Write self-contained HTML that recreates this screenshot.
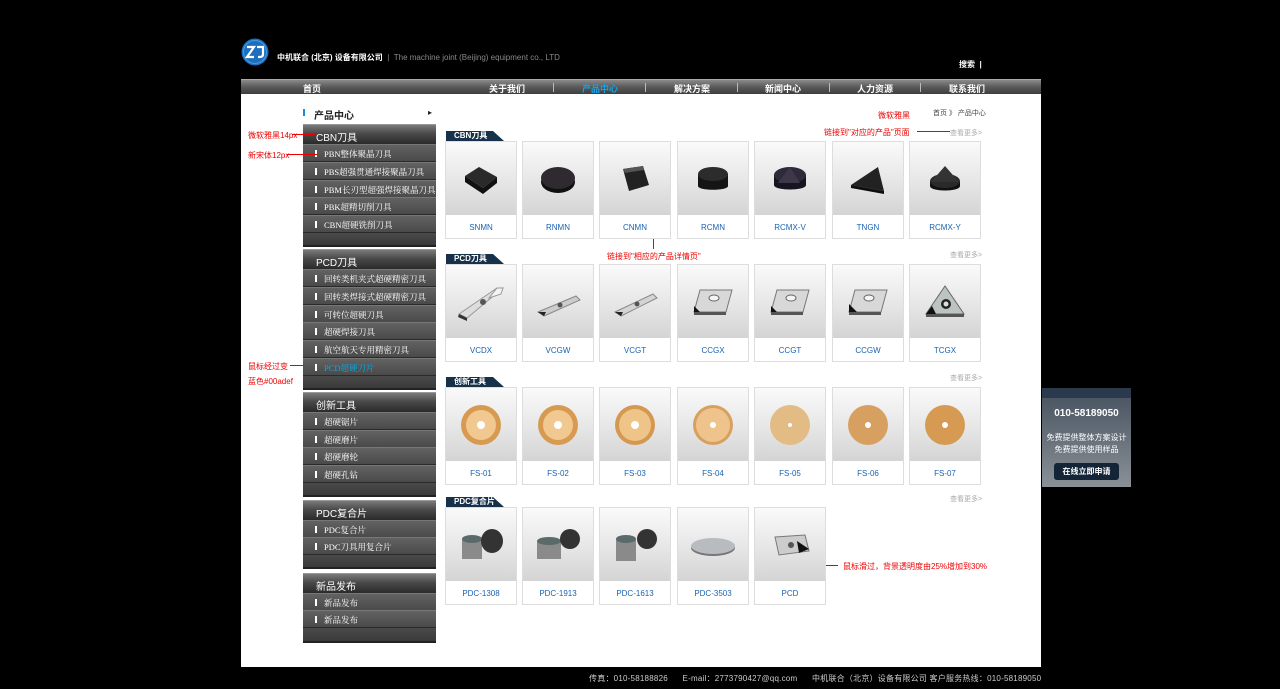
<!DOCTYPE html>
<html><head><meta charset="utf-8"><style>
*{margin:0;padding:0;box-sizing:border-box}
body{width:1280px;height:689px;background:#000;position:relative;overflow:hidden;font-family:"Liberation Sans","Noto Sans CJK SC",sans-serif;color:#fff}
.a{position:absolute}
.nav{left:241px;top:79px;width:800px;height:15px;background:linear-gradient(#8a8a8a,#5a5a5a 50%,#3e3e3e);border-top:1px solid #aaa}
.nav span{position:absolute;top:2px;font-size:9px;font-weight:bold;color:#fff}
.nav i{position:absolute;top:3px;width:1px;height:9px;background:#bbb}
.main{left:241px;top:94px;width:800px;height:573px;background:#fff}
.hd{left:303px;width:133px;height:20px;background:linear-gradient(#7a7a7a,#4a4a4a 45%,#2a2a2a);font-size:10px;padding:4px 0 0 13px;color:#fff;border-top:1px solid #999}
.it{left:303px;width:133px;height:18px;background:linear-gradient(#626262,#4a4a4a);border-bottom:1px solid #2a2a2a;border-top:1px solid #777;font-size:8.5px;padding:3px 0 0 21px;color:#fff;font-family:"Liberation Serif","Noto Serif CJK SC",serif;white-space:nowrap;overflow:hidden}
.it:before{content:"";position:absolute;left:12px;top:5px;width:2px;height:7px;background:#fff}
.em{left:303px;width:133px;height:14px;background:linear-gradient(#4a4a4a,#3a3a3a);border-bottom:2px solid #222}
.tag{height:10px;width:58px;background:#18314a;clip-path:polygon(0 0,47px 0,58px 100%,0 100%);font-size:8px;font-weight:bold;padding:0 0 0 8px;line-height:10px}
.card{width:72px;height:98px;border:1px solid #ddd;background:#fff}
.card .im{height:73px;background:linear-gradient(#fafafa,#e6e6e6 55%,#d4d4d4);display:flex;align-items:center;justify-content:center}
.card .lb{height:24px;text-align:center;font-size:8px;color:#1a62b0;line-height:25px}
.more{font-size:7px;color:#aaa}
.red{color:#e00;font-size:8px}
.rl{height:1px;background:#e00}
</style></head><body>
<svg class="a" style="left:241px;top:38px" width="28" height="28"><circle cx="14" cy="14" r="13.5" fill="#1c6fbe"/><circle cx="14" cy="14" r="11.5" fill="none" stroke="#4a9be0" stroke-width="1"/><path d="M6 9h7l-7 10h7M16 9h6v7c0 3-2 3-5 3" stroke="#fff" stroke-width="2.2" fill="none"/></svg>
<div class="a" style="left:277px;top:52px;font-size:8px;font-weight:bold">中机联合 (北京) 设备有限公司 <span style="color:#888;font-weight:normal">&nbsp;|&nbsp; The machine joint (Beijing) equipment co., LTD</span></div>
<div class="a" style="left:959px;top:59px;font-size:8px;font-weight:bold">搜索 &nbsp;|</div>
<div class="a nav">
<span style="left:62px">首页</span><span style="left:248px">关于我们</span><i style="left:312px"></i><span style="left:341px;color:#14a2e6">产品中心</span><i style="left:404px"></i><span style="left:433px">解决方案</span><i style="left:496px"></i><span style="left:524px">新闻中心</span><i style="left:588px"></i><span style="left:616px">人力资源</span><i style="left:679px"></i><span style="left:708px">联系我们</span></div>
<div class="a main"></div>
<div class="a" style="left:303px;top:109px;width:2px;height:7px;background:#1a8ae0"></div>
<div class="a" style="left:314px;top:107px;font-size:10px;color:#222;font-weight:bold">产品中心</div>
<div class="a" style="left:428px;top:108px;font-size:8px;color:#222">▸</div>
<div class="a hd" style="top:124px">CBN刀具</div>
<div class="a it" style="top:144px">PBN整体聚晶刀具</div>
<div class="a it" style="top:162px">PBS超强贯通焊接聚晶刀具</div>
<div class="a it" style="top:180px">PBM长刃型超强焊接聚晶刀具</div>
<div class="a it" style="top:197px">PBK超精切削刀具</div>
<div class="a it" style="top:215px">CBN超硬铣削刀具</div>
<div class="a em" style="top:233px"></div>
<div class="a hd" style="top:249px">PCD刀具</div>
<div class="a it" style="top:269px">回转类机夹式超硬精密刀具</div>
<div class="a it" style="top:287px">回转类焊接式超硬精密刀具</div>
<div class="a it" style="top:305px">可转位超硬刀具</div>
<div class="a it" style="top:322px">超硬焊接刀具</div>
<div class="a it" style="top:340px">航空航天专用精密刀具</div>
<div class="a it" style="top:358px;color:#00adef">PCD超硬刀片</div>
<div class="a em" style="top:376px"></div>
<div class="a hd" style="top:392px">创新工具</div>
<div class="a it" style="top:412px">超硬锯片</div>
<div class="a it" style="top:430px">超硬磨片</div>
<div class="a it" style="top:447px">超硬磨轮</div>
<div class="a it" style="top:465px">超硬孔钻</div>
<div class="a em" style="top:483px"></div>
<div class="a hd" style="top:500px">PDC复合片</div>
<div class="a it" style="top:520px">PDC复合片</div>
<div class="a it" style="top:537px">PDC刀具用复合片</div>
<div class="a em" style="top:555px"></div>
<div class="a hd" style="top:573px">新品发布</div>
<div class="a it" style="top:593px">新品发布</div>
<div class="a it" style="top:610px">新品发布</div>
<div class="a em" style="top:628px;height:15px"></div>
<div class="a red" style="left:248px;top:130px">微软雅黑14px</div><div class="a rl" style="left:292px;top:134px;width:24px"></div>
<div class="a red" style="left:248px;top:150px">新宋体12px</div><div class="a rl" style="left:287px;top:154px;width:30px"></div>
<div class="a red" style="left:248px;top:361px">鼠标经过变</div><div class="a rl" style="left:290px;top:365px;width:14px"></div>
<div class="a red" style="left:248px;top:376px">蓝色#00adef</div>
<div class="a red" style="left:878px;top:110px">微软雅黑</div>
<div class="a" style="left:933px;top:108px;font-size:7px;color:#444">首页 》 产品中心</div>
<div class="a red" style="left:824px;top:127px">链接到"对应的产品"页面</div><div class="a rl" style="left:917px;top:131px;width:33px"></div>
<div class="a red" style="left:607px;top:251px">链接到"相应的产品详情页"</div><div class="a rl" style="left:653px;top:211px;width:1px;height:38px"></div>
<div class="a red" style="left:843px;top:561px">鼠标滑过，背景透明度由25%增加到30%</div><div class="a rl" style="left:820px;top:565px;width:18px"></div>
<div class="a tag" style="left:446px;top:131px">CBN刀具</div><div class="a more" style="left:950px;top:128px">查看更多&gt;</div>
<div class="a tag" style="left:446px;top:254px">PCD刀具</div><div class="a more" style="left:950px;top:250px">查看更多&gt;</div>
<div class="a tag" style="left:446px;top:377px">创新工具</div><div class="a more" style="left:950px;top:373px">查看更多&gt;</div>
<div class="a tag" style="left:446px;top:497px">PDC复合片</div><div class="a more" style="left:950px;top:494px">查看更多&gt;</div>
<div class="a card" style="left:445px;top:141px"><div class="im"><svg width="40" height="34"><path d="M4 14 18 5 36 15 22 26Z" fill="#2a2a2a"/><path d="M4 14v6l18 12v-6ZM22 26v6l14-11v-6Z" fill="#111"/></svg></div><div class="lb">SNMN</div></div>
<div class="a card" style="left:522px;top:141px"><div class="im"><svg width="40" height="34"><ellipse cx="20" cy="20" rx="17" ry="11" fill="#111"/><ellipse cx="20" cy="16" rx="17" ry="11" fill="#2e2a30"/></svg></div><div class="lb">RNMN</div></div>
<div class="a card" style="left:599px;top:141px"><div class="im"><svg width="40" height="36"><path d="M8 8 28 5 34 24 14 30Z" fill="#222"/><path d="M8 8 28 5 29 9 10 12Z" fill="#555"/></svg></div><div class="lb">CNMN</div></div>
<div class="a card" style="left:677px;top:141px"><div class="im"><svg width="40" height="36"><path d="M5 13v12c0 5 30 5 30 0V13Z" fill="#151515"/><ellipse cx="20" cy="13" rx="15" ry="7" fill="#2c2c2c"/></svg></div><div class="lb">RCMN</div></div>
<div class="a card" style="left:754px;top:141px"><div class="im"><svg width="40" height="36"><path d="M4 14v10c0 6 32 6 32 0V14Z" fill="#161420"/><ellipse cx="20" cy="14" rx="16" ry="8" fill="#2e2a3a"/><path d="M20 6 8 22 30 22Z" fill="#3c3848"/></svg></div><div class="lb">RCMX-V</div></div>
<div class="a card" style="left:832px;top:141px"><div class="im"><svg width="40" height="36"><path d="M3 24 30 6 36 30Z" fill="#222"/><path d="M3 24 36 30 36 33 3 27Z" fill="#0e0e0e"/></svg></div><div class="lb">TNGN</div></div>
<div class="a card" style="left:909px;top:141px"><div class="im"><svg width="40" height="36"><path d="M5 20v5c0 6 30 6 30 0v-5Z" fill="#111"/><ellipse cx="20" cy="20" rx="15" ry="7" fill="#2a2a2a"/><path d="M20 5 6 21h28Z" fill="#333"/></svg></div><div class="lb">RCMX-Y</div></div>
<div class="a card" style="left:445px;top:264px"><div class="im"><svg width="56" height="44"><path d="M6 34 44 8 50 8 14 38Z" fill="#ddd" stroke="#999"/><path d="M44 8 50 8 48 14 36 18Z" fill="#f4f4f4" stroke="#999"/><path d="M6 34 14 38 14 41 5 37Z" fill="#333"/><circle cx="30" cy="22" r="3" fill="#555"/></svg></div><div class="lb">VCDX</div></div>
<div class="a card" style="left:522px;top:264px"><div class="im"><svg width="56" height="44"><path d="M8 32 46 16 50 20 14 36Z" fill="#ccc" stroke="#888"/><path d="M8 32 14 36 16 32Z" fill="#222"/><circle cx="30" cy="25" r="2.5" fill="#555"/></svg></div><div class="lb">VCGW</div></div>
<div class="a card" style="left:599px;top:264px"><div class="im"><svg width="56" height="44"><path d="M8 32 46 14 50 18 14 36Z" fill="#d4d4d4" stroke="#888"/><path d="M8 32 14 36 16 32Z" fill="#222"/><circle cx="30" cy="24" r="2.5" fill="#555"/></svg></div><div class="lb">VCGT</div></div>
<div class="a card" style="left:677px;top:264px"><div class="im"><svg width="46" height="36"><path d="M10 6 42 6 36 28 4 28Z" fill="#d8d8d8" stroke="#777"/><path d="M4 28h32v3H4Z" fill="#555"/><path d="M4 22 10 28H4Z" fill="#111"/><ellipse cx="24" cy="14" rx="5" ry="3" fill="#f4f4f4" stroke="#666"/></svg></div><div class="lb">CCGX</div></div>
<div class="a card" style="left:754px;top:264px"><div class="im"><svg width="46" height="36"><path d="M10 6 42 6 36 28 4 28Z" fill="#d8d8d8" stroke="#777"/><path d="M4 28h32v3H4Z" fill="#555"/><path d="M4 22 10 28H4Z" fill="#111"/><ellipse cx="24" cy="14" rx="5" ry="3" fill="#f4f4f4" stroke="#666"/></svg></div><div class="lb">CCGT</div></div>
<div class="a card" style="left:832px;top:264px"><div class="im"><svg width="46" height="36"><path d="M10 6 42 6 36 28 4 28Z" fill="#d8d8d8" stroke="#777"/><path d="M4 28h32v3H4Z" fill="#555"/><path d="M4 20 12 28H4Z" fill="#111"/><ellipse cx="24" cy="14" rx="5" ry="3" fill="#f4f4f4" stroke="#666"/></svg></div><div class="lb">CCGW</div></div>
<div class="a card" style="left:909px;top:264px"><div class="im"><svg width="46" height="40"><path d="M23 4 42 32H4Z" fill="#bcc4c2" stroke="#666"/><path d="M4 32h38v3H4Z" fill="#555"/><path d="M4 32 10 24 14 32Z" fill="#111"/><circle cx="24" cy="22" r="5" fill="#222"/><circle cx="24" cy="22" r="2.5" fill="#ddd"/></svg></div><div class="lb">TCGX</div></div>
<div class="a card" style="left:445px;top:387px"><div class="im"><svg width="44" height="44"><circle cx="22" cy="22" r="20" fill="#d79a50"/><circle cx="22" cy="22" r="15" fill="#f0c890"/><circle cx="22" cy="22" r="4" fill="#fff"/></svg></div><div class="lb">FS-01</div></div>
<div class="a card" style="left:522px;top:387px"><div class="im"><svg width="44" height="44"><circle cx="22" cy="22" r="20" fill="#d79a50"/><circle cx="22" cy="22" r="15" fill="#f0c890"/><circle cx="22" cy="22" r="4" fill="#fff"/></svg></div><div class="lb">FS-02</div></div>
<div class="a card" style="left:599px;top:387px"><div class="im"><svg width="44" height="44"><circle cx="22" cy="22" r="20" fill="#d59850"/><circle cx="22" cy="22" r="16" fill="#efc488"/><circle cx="22" cy="22" r="4" fill="#fff"/></svg></div><div class="lb">FS-03</div></div>
<div class="a card" style="left:677px;top:387px"><div class="im"><svg width="44" height="44"><circle cx="22" cy="22" r="20" fill="#d8a060"/><circle cx="22" cy="22" r="17" fill="#eec48c"/><circle cx="22" cy="22" r="3" fill="#fff"/></svg></div><div class="lb">FS-04</div></div>
<div class="a card" style="left:754px;top:387px"><div class="im"><svg width="44" height="44"><circle cx="22" cy="22" r="20" fill="#e2bc84"/><circle cx="22" cy="22" r="2" fill="#fff"/></svg></div><div class="lb">FS-05</div></div>
<div class="a card" style="left:832px;top:387px"><div class="im"><svg width="44" height="44"><circle cx="22" cy="22" r="20" fill="#d8a060"/><circle cx="22" cy="22" r="3" fill="#fff"/></svg></div><div class="lb">FS-06</div></div>
<div class="a card" style="left:909px;top:387px"><div class="im"><svg width="44" height="44"><circle cx="22" cy="22" r="20" fill="#d69a52"/><circle cx="22" cy="22" r="3" fill="#fff"/></svg></div><div class="lb">FS-07</div></div>
<div class="a card" style="left:445px;top:507px"><div class="im"><svg width="50" height="40"><rect x="6" y="14" width="20" height="20" fill="#8a8a8a"/><ellipse cx="16" cy="14" rx="10" ry="4" fill="#5a6a6a"/><ellipse cx="36" cy="16" rx="11" ry="12" fill="#333"/></svg></div><div class="lb">PDC-1308</div></div>
<div class="a card" style="left:522px;top:507px"><div class="im"><svg width="50" height="40"><rect x="4" y="16" width="24" height="18" fill="#8a8a8a"/><ellipse cx="16" cy="16" rx="12" ry="4" fill="#5a6a6a"/><ellipse cx="37" cy="14" rx="10" ry="10" fill="#333"/></svg></div><div class="lb">PDC-1913</div></div>
<div class="a card" style="left:599px;top:507px"><div class="im"><svg width="50" height="40"><rect x="6" y="14" width="20" height="22" fill="#8a8a8a"/><ellipse cx="16" cy="14" rx="10" ry="4" fill="#5a6a6a"/><ellipse cx="37" cy="14" rx="10" ry="10" fill="#333"/></svg></div><div class="lb">PDC-1613</div></div>
<div class="a card" style="left:677px;top:507px"><div class="im"><svg width="50" height="40"><ellipse cx="25" cy="23" rx="22" ry="8" fill="#777"/><ellipse cx="25" cy="21" rx="22" ry="8" fill="#b8bcc0"/></svg></div><div class="lb">PDC-3503</div></div>
<div class="a card" style="left:754px;top:507px"><div class="im"><svg width="46" height="36"><path d="M8 10 38 8 42 24 12 28Z" fill="#ccc" stroke="#777"/><path d="M30 14 42 22 32 26Z" fill="#111"/><circle cx="24" cy="18" r="3" fill="#555"/></svg></div><div class="lb">PCD</div></div>
<div class="a" style="left:1042px;top:388px;width:89px;height:99px;background:linear-gradient(#3a4654,#4c5764 10%,#8a9096)">
<div style="position:absolute;top:0;left:0;width:89px;height:10px;background:#2a3a4c"></div>
<div style="position:absolute;top:20px;width:89px;text-align:center;font-size:10px;font-weight:bold">010-58189050</div>
<div style="position:absolute;top:44px;width:89px;text-align:center;font-size:8px;line-height:12px">免费提供整体方案设计<br>免费提供使用样品</div>
<div style="position:absolute;top:75px;left:12px;width:65px;height:17px;background:#142538;border-radius:3px;text-align:center;font-size:8px;line-height:17px;font-weight:bold">在线立即申请</div></div>
<div class="a" style="left:589px;top:673px;font-size:8px;color:#ccc;white-space:nowrap;letter-spacing:0.22px">传真：010-58188826 &nbsp;&nbsp;&nbsp;&nbsp; E-mail：2773790427@qq.com &nbsp;&nbsp;&nbsp;&nbsp; 中机联合（北京）设备有限公司 客户服务热线：010-58189050</div>
</body></html>
